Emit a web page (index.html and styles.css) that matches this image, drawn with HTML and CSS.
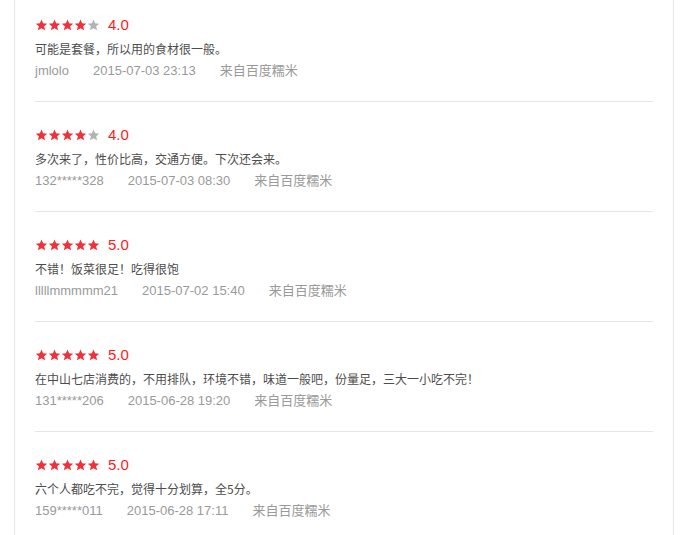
FILE: index.html
```html
<!DOCTYPE html>
<html lang="zh-CN">

<head>
    <meta charset="UTF-8">
    <meta name="viewport" content="width=device-width, initial-scale=1.0">
    <title>用户评价</title>
    <link rel="stylesheet" href="styles.css">
</head>

<body>
    <svg width="0" height="0" class="defs">
        <defs>
            <polygon id="star" points="12,1 15.1,8.3 23,8.9 17,14 18.9,21.8 12,17.6 5.1,21.8 7,14 1,8.9 8.9,8.3" />
        </defs>
    </svg>

    <div class="comments">
        <div class="comment">
            <div class="rating">
                <span class="stars">
                    <svg class="star on" viewBox="0 0 24 23"><use href="#star" /></svg>
                    <svg class="star on" viewBox="0 0 24 23"><use href="#star" /></svg>
                    <svg class="star on" viewBox="0 0 24 23"><use href="#star" /></svg>
                    <svg class="star on" viewBox="0 0 24 23"><use href="#star" /></svg>
                    <svg class="star" viewBox="0 0 24 23"><use href="#star" /></svg>
                </span>
                <span class="score">4.0</span>
            </div>
            <p class="text">可能是套餐，所以用的食材很一般。</p>
            <div class="meta">
                <span class="user">jmlolo</span>
                <span class="time">2015-07-03 23:13</span>
                <span class="from">来自百度糯米</span>
            </div>
        </div>

        <div class="comment">
            <div class="rating">
                <span class="stars">
                    <svg class="star on" viewBox="0 0 24 23"><use href="#star" /></svg>
                    <svg class="star on" viewBox="0 0 24 23"><use href="#star" /></svg>
                    <svg class="star on" viewBox="0 0 24 23"><use href="#star" /></svg>
                    <svg class="star on" viewBox="0 0 24 23"><use href="#star" /></svg>
                    <svg class="star" viewBox="0 0 24 23"><use href="#star" /></svg>
                </span>
                <span class="score">4.0</span>
            </div>
            <p class="text">多次来了，性价比高，交通方便。下次还会来。</p>
            <div class="meta">
                <span class="user">132*****328</span>
                <span class="time">2015-07-03 08:30</span>
                <span class="from">来自百度糯米</span>
            </div>
        </div>

        <div class="comment">
            <div class="rating">
                <span class="stars">
                    <svg class="star on" viewBox="0 0 24 23"><use href="#star" /></svg>
                    <svg class="star on" viewBox="0 0 24 23"><use href="#star" /></svg>
                    <svg class="star on" viewBox="0 0 24 23"><use href="#star" /></svg>
                    <svg class="star on" viewBox="0 0 24 23"><use href="#star" /></svg>
                    <svg class="star on" viewBox="0 0 24 23"><use href="#star" /></svg>
                </span>
                <span class="score">5.0</span>
            </div>
            <p class="text">不错！饭菜很足！吃得很饱</p>
            <div class="meta">
                <span class="user">lllllmmmmm21</span>
                <span class="time">2015-07-02 15:40</span>
                <span class="from">来自百度糯米</span>
            </div>
        </div>

        <div class="comment">
            <div class="rating">
                <span class="stars">
                    <svg class="star on" viewBox="0 0 24 23"><use href="#star" /></svg>
                    <svg class="star on" viewBox="0 0 24 23"><use href="#star" /></svg>
                    <svg class="star on" viewBox="0 0 24 23"><use href="#star" /></svg>
                    <svg class="star on" viewBox="0 0 24 23"><use href="#star" /></svg>
                    <svg class="star on" viewBox="0 0 24 23"><use href="#star" /></svg>
                </span>
                <span class="score">5.0</span>
            </div>
            <p class="text">在中山七店消费的，不用排队，环境不错，味道一般吧，份量足，三大一小吃不完！</p>
            <div class="meta">
                <span class="user">131*****206</span>
                <span class="time">2015-06-28 19:20</span>
                <span class="from">来自百度糯米</span>
            </div>
        </div>

        <div class="comment">
            <div class="rating">
                <span class="stars">
                    <svg class="star on" viewBox="0 0 24 23"><use href="#star" /></svg>
                    <svg class="star on" viewBox="0 0 24 23"><use href="#star" /></svg>
                    <svg class="star on" viewBox="0 0 24 23"><use href="#star" /></svg>
                    <svg class="star on" viewBox="0 0 24 23"><use href="#star" /></svg>
                    <svg class="star on" viewBox="0 0 24 23"><use href="#star" /></svg>
                </span>
                <span class="score">5.0</span>
            </div>
            <p class="text">六个人都吃不完，觉得十分划算，全5分。</p>
            <div class="meta">
                <span class="user">159*****011</span>
                <span class="time">2015-06-28 17:11</span>
                <span class="from">来自百度糯米</span>
            </div>
        </div>
    </div>
</body>

</html>
```

FILE: styles.css
```css
body {
    margin: 0;
    background-color: #fff;
    font-family: "Liberation Sans", "Noto Sans CJK SC", sans-serif;
}

.defs {
    position: absolute;
}

.comments {
    width: 618px;
    margin-left: 14px;
    padding: 0 20px;
    border-left: 1px solid #e6e6e6;
    border-right: 1px solid #e6e6e6;
}

.comment {
    padding: 23px 0 19px;
    border-bottom: 1px solid #e6e6e6;
}

.comment:first-child {
    padding-top: 15px;
}

.rating {
    display: flex;
    align-items: center;
    height: 20px;
}

.stars {
    display: flex;
    margin-right: 8px;
}

.star {
    width: 13px;
    height: 12px;
    fill: #b3b3b3;
}

.star.on {
    fill: #f2303a;
}

.score {
    color: #ff1a1a;
    font-size: 15px;
    line-height: 20px;
}

.text {
    margin: 3px 0 0;
    font-family: "Noto Sans CJK SC", "Liberation Sans", sans-serif;
    font-size: 12px;
    line-height: 22px;
    color: #4d4d4d;
}

.meta {
    display: flex;
    gap: 24px;
    font-size: 13px;
    line-height: 22px;
    color: #9a9a9a;
}
```
